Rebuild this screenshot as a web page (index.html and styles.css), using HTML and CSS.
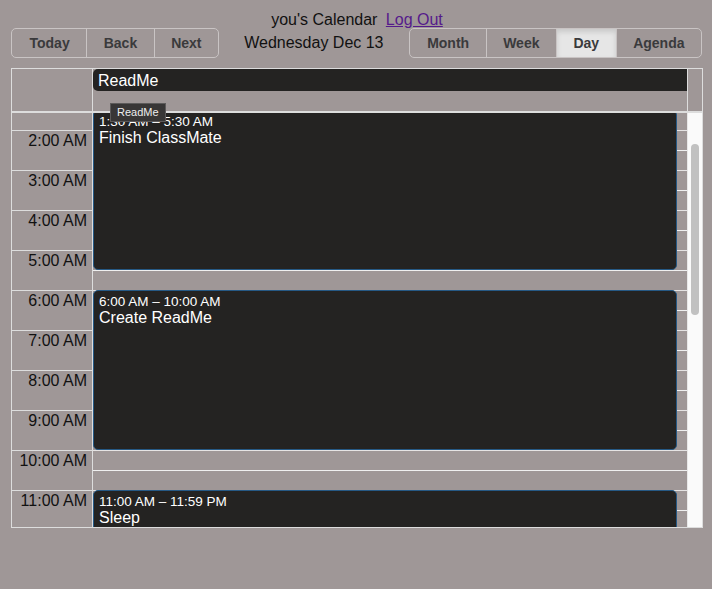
FILE: index.html
```html
<!DOCTYPE html>
<html>
<head>
<meta charset="utf-8">
<link rel="stylesheet" href="styles.css">
</head>
<body>
<div class="page">
  <div class="title">you's Calendar <a class="logout" href="#">Log Out</a></div>
  <div class="toolbar">
    <div class="btn-group">
      <button class="btn">Today</button>
      <button class="btn">Back</button>
      <button class="btn">Next</button>
    </div>
    <div class="label">Wednesday Dec 13</div>
    <div class="btn-group">
      <button class="btn">Month</button>
      <button class="btn">Week</button>
      <button class="btn active">Day</button>
      <button class="btn">Agenda</button>
    </div>
  </div>
  <div class="cal">
    <div class="header">
      <div class="h-gutter"></div>
      <div class="allday"><div class="ad-event">ReadMe</div></div>
      <div class="h-spacer"></div>
    </div>
    <div class="content">
      <div class="scroller">
        <div class="inner">
          <div class="gutter">
            <div class="g-group"><span>1:00 AM</span></div>
            <div class="g-group"><span>2:00 AM</span></div>
            <div class="g-group"><span>3:00 AM</span></div>
            <div class="g-group"><span>4:00 AM</span></div>
            <div class="g-group"><span>5:00 AM</span></div>
            <div class="g-group"><span>6:00 AM</span></div>
            <div class="g-group"><span>7:00 AM</span></div>
            <div class="g-group"><span>8:00 AM</span></div>
            <div class="g-group"><span>9:00 AM</span></div>
            <div class="g-group"><span>10:00 AM</span></div>
            <div class="g-group"><span>11:00 AM</span></div>
            <div class="g-group"><span>12:00 PM</span></div>
          </div>
          <div class="day">
            <div class="d-group"><div class="slot"></div><div class="slot"></div></div>
            <div class="d-group"><div class="slot"></div><div class="slot"></div></div>
            <div class="d-group"><div class="slot"></div><div class="slot"></div></div>
            <div class="d-group"><div class="slot"></div><div class="slot"></div></div>
            <div class="d-group"><div class="slot"></div><div class="slot"></div></div>
            <div class="d-group"><div class="slot"></div><div class="slot"></div></div>
            <div class="d-group"><div class="slot"></div><div class="slot"></div></div>
            <div class="d-group"><div class="slot"></div><div class="slot"></div></div>
            <div class="d-group"><div class="slot"></div><div class="slot"></div></div>
            <div class="d-group"><div class="slot"></div><div class="slot"></div></div>
            <div class="d-group"><div class="slot"></div><div class="slot"></div></div>
            <div class="d-group"><div class="slot"></div><div class="slot"></div></div>
            <div class="event" style="top:20px;height:160px">
              <div class="ev-label">1:30 AM – 5:30 AM</div>
              <div class="ev-title">Finish ClassMate</div>
            </div>
            <div class="event" style="top:200px;height:160px">
              <div class="ev-label">6:00 AM – 10:00 AM</div>
              <div class="ev-title">Create ReadMe</div>
            </div>
            <div class="event" style="top:400px;height:400px">
              <div class="ev-label">11:00 AM – 11:59 PM</div>
              <div class="ev-title">Sleep</div>
            </div>
          </div>
        </div>
      </div>
      <div class="scrollbar"><div class="thumb"></div></div>
    </div>
  </div>
  <div class="tooltip">ReadMe</div>
</div>
</body>
</html>
```
FILE: styles.css
```css
html, body {
  margin: 0;
  padding: 0;
  background: #9f9797;
}
body {
  font-family: "Liberation Sans", Arial, sans-serif;
  font-size: 16px;
  color: #111;
}
.page {
  position: relative;
  padding: 11px 10px 0 11px;
  width: 712px;
  height: 589px;
  box-sizing: border-box;
}
.title {
  text-align: center;
  line-height: 18px;
  height: 17px;
  padding-left: 1px;
}
.logout {
  color: #551a8b;
  text-decoration: underline;
  margin-left: 4px;
}
.toolbar {
  display: flex;
  align-items: center;
  margin-bottom: 10px;
}
.label {
  flex: 1;
  text-align: center;
  padding: 0 10px;
  color: #111;
}
.btn-group {
  display: flex;
  border: 1px solid #c9c4c4;
  border-radius: 5px;
  overflow: hidden;
}
.btn {
  font-family: "Liberation Sans", Arial, sans-serif;
  font-size: 14px;
  font-weight: bold;
  color: #3a3a3c;
  background: transparent;
  border: none;
  border-left: 1px solid #c9c4c4;
  padding: 6px 16.5px;
  line-height: 16px;
  margin: 0;
}
.btn:first-child {
  border-left: none;
  padding-left: 17.5px;
}
.btn.active {
  background: #e6e6e6;
  box-shadow: inset 0 3px 5px rgba(0, 0, 0, 0.125);
}
.cal {
  border: 1px solid #ddd;
  width: 690px;
}
.header {
  display: flex;
  height: 42px;
  border-bottom: 2px solid #ddd;
}
.h-gutter {
  width: 81px;
  box-sizing: border-box;
  border-right: 1px solid #ddd;
}
.allday {
  width: 595px;
  box-sizing: border-box;
  border-right: 1px solid #ddd;
}
.ad-event {
  background: #242322;
  color: #fff;
  height: 22px;
  line-height: 18px;
  padding: 3px 5px 1px;
  box-sizing: border-box;
  border-radius: 5px 0 0 5px;
}
.h-spacer {
  width: 14px;
}
.content {
  display: flex;
  height: 414px;
}
.scroller {
  width: 675px;
  overflow: hidden;
}
.inner {
  display: flex;
  margin-top: -23px;
}
.gutter {
  width: 81px;
  box-sizing: border-box;
  border-right: 1px solid #ddd;
}
.g-group {
  height: 40px;
  box-sizing: border-box;
  border-top: 1px solid #ddd;
  text-align: right;
  padding-right: 5px;
  padding-top: 1px;
  line-height: 18px;
  color: #111;
}
.day {
  position: relative;
  width: 594px;
}
.d-group {
  height: 40px;
  box-sizing: border-box;
  border-top: 1px solid #e6e4e4;
}
.slot {
  height: 19px;
}
.slot + .slot {
  height: 20px;
  border-top: 1px solid #f0f0f0;
}
.event {
  position: absolute;
  left: 0;
  right: 10px;
  box-sizing: border-box;
  background: #242322;
  border: 1px solid #265985;
  border-radius: 5px;
  padding: 3px 5px 2px;
  color: #fff;
  overflow: hidden;
}
.ev-label {
  font-size: 13.5px;
  line-height: 15px;
}
.ev-title {
  font-size: 16px;
  line-height: 18px;
}
.scrollbar {
  width: 15px;
  box-sizing: border-box;
  background: #fafafa;
  border-left: 1px solid #e8e8e8;
  position: relative;
}
.thumb {
  position: absolute;
  left: 3px;
  top: 31px;
  width: 8px;
  height: 171px;
  border-radius: 4px;
  background: #c1c1c1;
}
.tooltip {
  position: absolute;
  left: 110px;
  top: 103px;
  height: 19px;
  box-sizing: border-box;
  padding: 0 6px;
  background: #383636;
  border: 1px solid #5c5a5a;
  color: #eee;
  font-size: 11px;
  line-height: 17px;
}
```
